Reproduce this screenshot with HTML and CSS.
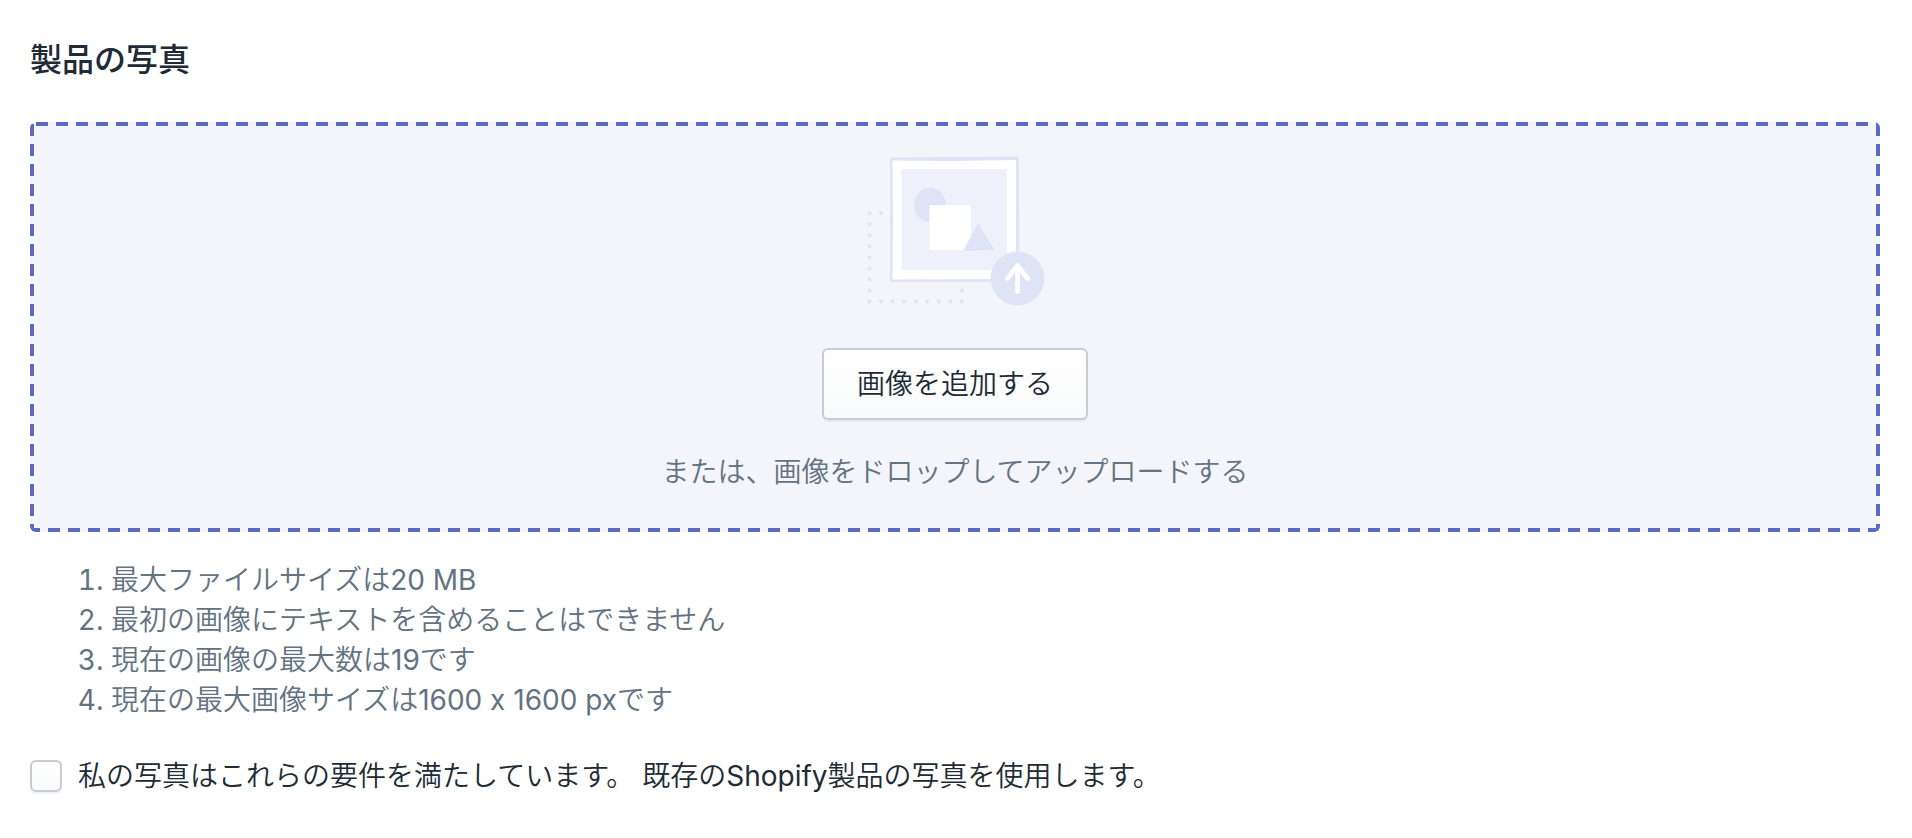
FILE: index.html
```html
<!DOCTYPE html>
<html lang="ja">

<head>
	<meta charset="UTF-8">
	<title>製品の写真</title>
	<link rel="stylesheet" href="styles.css">
</head>

<body>
	<main class="photos">
		<h2 class="photos_header">製品の写真</h2>

		<div class="dropzone">
			<svg class="dropzone_image" width="180" height="152" viewBox="15 16 180 152" aria-hidden="true">
				<!-- Dotted frame -->
				<g fill="none" stroke="#dfe3f6" stroke-width="4" stroke-linecap="round">
					<path d="M19.5 73.3V162" stroke-dasharray="0 11.02" />
					<path d="M31 73.3h.01M112 150.5h.01" />
					<path d="M19.5 161.5H113" stroke-dasharray="0 11.55" />
				</g>
				<!-- Picture -->
				<path d="M41 18.5L168 17.5L168.5 141H41Z" fill="#dfe3f6" stroke="#dfe3f6" stroke-width="2" stroke-linejoin="round" />
				<path d="M42.5 20.5L100 21L166 20L166 139L42.5 139.5L43 80Z" fill="#fff" />
				<path d="M51.5 29H157V130H51.5Z" fill="#eef1fb" />
				<ellipse cx="80" cy="65" rx="16" ry="17.3" fill="#dfe3f6" />
				<path d="M79.5 65H121V110H79.5Z" fill="#fff" />
				<path d="M128 84L144 109.5L114 110.5Z" fill="#dfe3f6" stroke="#dfe3f6" stroke-linejoin="round" />
				<!-- Upload badge -->
				<circle cx="167.5" cy="138.5" r="27" fill="#dfe3f6" />
				<path d="M167.5 151.5V125.5M157.5 138.5L167.5 125.5L177.5 138.5" fill="none" stroke="#fff" stroke-width="4.6" stroke-linecap="round" stroke-linejoin="round" />
			</svg>
			<button type="button" class="dropzone_button">画像を追加する</button>
			<p class="dropzone_hint">または、画像をドロップしてアップロードする</p>
		</div>

		<ol class="requirements">
			<li>最大ファイルサイズは20 MB</li>
			<li>最初の画像にテキストを含めることはできません</li>
			<li>現在の画像の最大数は19です</li>
			<li>現在の最大画像サイズは1600 x 1600 pxです</li>
		</ol>

		<div class="confirm">
			<input type="checkbox" id="confirm_photos" class="confirm_checkbox">
			<label for="confirm_photos">私の写真はこれらの要件を満たしています。 既存のShopify製品の写真を使用します。</label>
		</div>
	</main>
</body>

</html>
```

FILE: styles.css
```css
* {
	box-sizing: border-box;
}

body {
	margin: 0;
	background-color: #fff;
	color: #212b36;
	font-family: Inter, "Noto Sans CJK JP DemiLight", "Noto Sans CJK JP", sans-serif;
	font-size: 28px;
	line-height: 40px;
}

.photos {
	padding: 40px 32px 40px 30px;
}

.photos_header {
	margin: 0 0 42px;
	font-family: Inter, "Noto Sans CJK JP", sans-serif;
	font-size: 32px;
	font-weight: 500;
	line-height: 40px;
}

/* Dashed edges: 12px dash, 8px gap */
.dropzone {
	display: flex;
	flex-direction: column;
	align-items: center;
	padding: 34px 20px 40px;
	border-radius: 6px;
	background-color: #f4f5fa;
	background-image:
		repeating-linear-gradient(90deg, #5c6ac4 0 12px, transparent 12px 20px),
		repeating-linear-gradient(90deg, #5c6ac4 0 12px, transparent 12px 20px),
		repeating-linear-gradient(180deg, #5c6ac4 0 12px, transparent 12px 20px),
		repeating-linear-gradient(180deg, #5c6ac4 0 12px, transparent 12px 20px);
	background-repeat: no-repeat;
	background-size: 100% 4px, 100% 4px, 4px 100%, 4px 100%;
	background-position: 6px 0, -2px 100%, 0 2px, 100% 2px;
}

.dropzone_image {
	display: block;
	margin-bottom: 40px;
}

.dropzone_button {
	height: 72px;
	padding: 0 33px;
	border: 2px solid #c4cdd5;
	border-radius: 6px;
	background: linear-gradient(to bottom, #fff, #f9fafb);
	box-shadow: 0 2px 0 rgba(22, 29, 37, 0.05);
	color: #212b36;
	font: inherit;
	cursor: pointer;
}

.dropzone_hint {
	margin: 32px 0 0;
	color: #637381;
}

.requirements {
	margin: 28px 0 36px;
	padding-left: 81px;
	color: #637381;
}

.confirm {
	display: flex;
	align-items: center;
	gap: 16px;
}

.confirm_checkbox {
	appearance: none;
	flex: none;
	width: 32px;
	height: 32px;
	margin: 0;
	border: 2px solid #c4cdd5;
	border-radius: 6px;
	background: linear-gradient(to bottom, #fff, #f9fafb);
	box-shadow: 0 2px 0 rgba(22, 29, 37, 0.05);
}

.confirm_checkbox:checked {
	background: #5c6ac4;
}
```
